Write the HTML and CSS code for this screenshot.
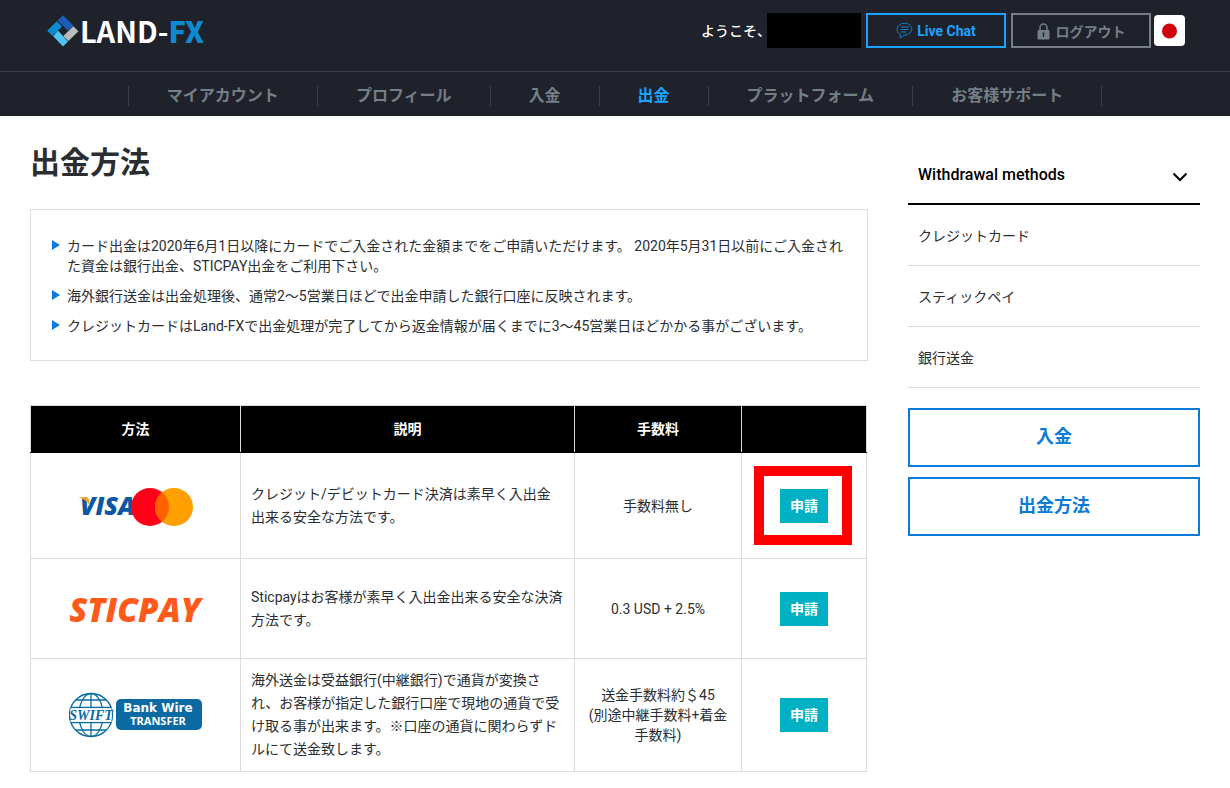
FILE: index.html
```html
<!DOCTYPE html>
<html lang="ja">
<head>
<meta charset="utf-8">
<meta name="viewport" content="width=device-width, initial-scale=1">
<title>出金方法 | LAND-FX</title>
<link rel="stylesheet" href="styles.css">
</head>
<body>
<header class="site-header">
  <div class="topbar">
    <a class="logo" href="#">
      <svg class="logo-mark" viewBox="0 0 32 32" width="32" height="32" aria-hidden="true">
        <path fill="#1b5cb8" d="M10.500 5.500L16 0.200L26.500 10.500L21 15.800Z"/>
        <path fill="#0b8bd3" d="M9.800 6.200L15 11.500L5.500 21L0.200 15.800Z"/>
        <path fill="#b9bbbd" d="M26.300 11.200L31.500 16.200L21.500 26L16.300 21Z"/>
        <path fill="#4fc3f2" d="M11 15.600L6.200 21.300L16 31.500L21 26.500Z"/>
      </svg>
      <span class="logo-text">LAND-<b>FX</b></span>
    </a>
    <div class="account">
      <span class="welcome">ようこそ、</span>
      <span class="user-name"></span>
      <button class="top-btn chat" type="button">
        <svg viewBox="0 0 17 17" width="17" height="17" fill="none" stroke="#1580d0" stroke-width="1" aria-hidden="true">
          <path d="M4 16L4.500 12.800C-1.500 9.500 0.500 1.500 8.500 1.200C18 1.300 18.500 12.500 8 13.200C7 14.500 5.500 15.500 4 16Z"/>
          <path d="M5 5h8M4.500 7.500h8M4.500 10h6"/>
        </svg>
        <span>Live Chat</span>
      </button>
      <button class="top-btn logout" type="button">
        <svg viewBox="0 0 13 17" width="13" height="17" aria-hidden="true">
          <path d="M3 8V4.500a3.500 3.500 0 0 1 7 0V8" fill="none" stroke="currentColor" stroke-width="1.500"/>
          <rect x="0.500" y="7" width="12" height="9.500" rx="1" fill="currentColor"/>
          <path d="M6.500 9.500v4.500M5.500 10.500h2" stroke="#1f222a" stroke-width="1.200"/>
        </svg>
        <span>ログアウト</span>
      </button>
      <button class="flag" type="button" aria-label="日本語">
        <svg viewBox="0 0 31 31" width="31" height="31" aria-hidden="true"><circle cx="15.500" cy="16" r="7.500" fill="#d0000f"/></svg>
      </button>
    </div>
  </div>
  <nav class="main-nav">
    <a href="#">マイアカウント</a>
    <a href="#">プロフィール</a>
    <a href="#">入金</a>
    <a class="active" href="#">出金</a>
    <a href="#">プラットフォーム</a>
    <a href="#">お客様サポート</a>
  </nav>
</header>

<div class="page">
  <main>
    <h1>出金方法</h1>
    <ul class="notes">
      <li>カード出金は2020年6月1日以降にカードでご入金された金額までをご申請いただけます。 2020年5月31日以前にご入金された資金は銀行出金、STICPAY出金をご利用下さい。</li>
      <li>海外銀行送金は出金処理後、通常2～5営業日ほどで出金申請した銀行口座に反映されます。</li>
      <li>クレジットカードはLand-FXで出金処理が完了してから返金情報が届くまでに3～45営業日ほどかかる事がございます。</li>
    </ul>
    <div class="table-wrap">
    <table class="methods">
      <colgroup><col class="c-method"><col><col class="c-fee"><col class="c-action"></colgroup>
      <thead>
        <tr><th>方法</th><th>説明</th><th>手数料</th><th></th></tr>
      </thead>
      <tbody>
        <tr class="row-card">
          <td>
            <svg class="brand" viewBox="0 0 134 50" width="134" height="50" role="img" aria-label="VISA Mastercard">
              <text class="visa" x="11" y="34">VISA</text>
              <path fill="#f7a520" d="M9 16H16.500Q19.500 16 20 19L21 25Q17 18 9 16Z"/>
              <circle cx="81" cy="26" r="19" fill="#ff0019"/>
              <circle cx="105" cy="26" r="19" fill="#ffa000"/>
              <path fill="#ff6000" d="M93 11.300A19 19 0 0 1 93 40.700A19 19 0 0 1 93 11.300Z"/>
            </svg>
          </td>
          <td class="desc">クレジット/デビットカード決済は素早く入出金出来る安全な方法です。</td>
          <td class="fee">手数料無し</td>
          <td><span class="highlight"><button class="apply" type="button">申請</button></span></td>
        </tr>
        <tr class="row-sticpay">
          <td>
            <svg class="brand" viewBox="0 0 134 50" width="134" height="50" role="img" aria-label="STICPAY">
              <text class="sticpay" x="66" y="38" text-anchor="middle">STICPAY</text>
            </svg>
          </td>
          <td class="desc">Sticpayはお客様が素早く入出金出来る安全な決済方法です。</td>
          <td class="fee">0.3 USD + 2.5%</td>
          <td><button class="apply" type="button">申請</button></td>
        </tr>
        <tr class="row-wire">
          <td>
            <svg class="brand" viewBox="1 0 134 50" width="134" height="50" role="img" aria-label="SWIFT Bank Wire Transfer">
              <g fill="none" stroke="#0b6aa2" stroke-width="1.300">
                <circle cx="23" cy="25" r="21.500"/>
                <ellipse cx="23" cy="25" rx="12" ry="21.500"/>
                <path d="M23 3.500v43M8 10h30M3 17.500h40M3 32.500h40M8 40h30"/>
              </g>
              <path fill="#fff" d="M2.500 18.200H43.500V31.800H2.500Z"/>
              <text class="swift" x="23" y="30" text-anchor="middle">SWIFT</text>
              <rect x="48" y="9" width="86" height="31" rx="5" fill="#0b6aa2"/>
              <text class="wire" x="90" y="22" text-anchor="middle">Bank Wire</text>
              <text class="transfer" x="90" y="35" text-anchor="middle">TRANSFER</text>
            </svg>
          </td>
          <td class="desc">海外送金は受益銀行(中継銀行)で通貨が変換され、お客様が指定した銀行口座で現地の通貨で受け取る事が出来ます。※口座の通貨に関わらずドルにて送金致します。</td>
          <td class="fee">送金手数料約＄45<br>(別途中継手数料+着金手数料)</td>
          <td><button class="apply" type="button">申請</button></td>
        </tr>
      </tbody>
    </table>
    </div>
  </main>

  <aside class="sidebar">
    <button class="side-title" type="button">
      <span>Withdrawal methods</span>
      <svg viewBox="0 0 16 10" width="16" height="10" fill="none" stroke="currentColor" stroke-width="2" aria-hidden="true"><path d="M1.500 1.500L8 8L14.500 1.500"/></svg>
    </button>
    <ul class="side-list">
      <li><a href="#">クレジットカード</a></li>
      <li><a href="#">スティックペイ</a></li>
      <li><a href="#">銀行送金</a></li>
    </ul>
    <a class="side-btn" href="#">入金</a>
    <a class="side-btn" href="#">出金方法</a>
  </aside>
</div>
</body>
</html>
```
FILE: styles.css
```css
* {
  box-sizing: border-box;
}

body {
  margin: 0;
  background: #fff;
  color: #2b2e31;
  font: 14px/20px Roboto, "Noto Sans CJK JP", sans-serif;
}

a {
  color: inherit;
  text-decoration: none;
}

button {
  font: inherit;
  cursor: pointer;
}

/* Header */
.site-header {
  background: #1f222a;
}

.topbar {
  display: flex;
  justify-content: space-between;
  align-items: flex-start;
  min-height: 72px;
  padding: 13px 45px 0 47px;
  border-bottom: 1px solid #3a3e46;
}

.logo {
  display: flex;
  align-items: flex-start;
  gap: 1px;
  padding-top: 2px;
}

.logo-text {
  color: #fff;
  font: 700 29px/30px "Noto Sans CJK JP", sans-serif;
}

.logo-text b {
  color: #0b8bd3;
  font-weight: 900;
}

.account {
  display: flex;
  align-items: center;
}

.welcome {
  color: #fff;
  font-weight: 500;
}

.user-name {
  width: 94px;
  height: 35px;
  margin-left: -4px;
  background: #000;
}

.top-btn {
  display: flex;
  justify-content: center;
  align-items: center;
  gap: 4px;
  width: 140px;
  height: 35px;
  margin-left: 5px;
  padding: 0;
  border: 2px solid;
  background: none;
  font-weight: 700;
}

.chat {
  color: #1aa3ff;
}

.logout {
  gap: 6px;
  padding-top: 2px;
  color: #757e86;
}

.flag {
  width: 31px;
  height: 31px;
  margin-left: 3px;
  padding: 0;
  border: 0;
  border-radius: 4px;
  background: #fff;
}

.flag svg {
  display: block;
}

.main-nav {
  display: flex;
  justify-content: center;
  padding: 14px 0 10px;
}

.main-nav a {
  padding: 0 38px;
  border-right: 1px solid #3a3e46;
  color: #757e86;
  font-size: 16px;
  font-weight: 700;
  line-height: 20px;
}

.main-nav a:first-child {
  border-left: 1px solid #3a3e46;
}

.main-nav .active {
  color: #1aa3ff;
}

/* Content */
.page {
  display: grid;
  grid-template-columns: minmax(0, 1fr) 292px;
  gap: 40px;
  padding: 27px 30px 16px;
}

h1 {
  margin: 0 0 26px;
  font-size: 30px;
  font-weight: 700;
  line-height: 40px;
}

.notes {
  display: grid;
  gap: 10px;
  margin: 0 0 44px;
  padding: 26px 20px 24px 21px;
  border: 1px solid #dcdcdc;
  list-style: none;
}

.notes li {
  display: flex;
  gap: 7px;
}

.notes li::before {
  content: "";
  flex: none;
  height: 0;
  margin-top: 4px;
  border-left: 8px solid #0a7be0;
  border-top: 5px solid transparent;
  border-bottom: 5px solid transparent;
}

.table-wrap {
  padding-right: 1px;
}

.methods {
  width: 100%;
  border-collapse: collapse;
  table-layout: fixed;
}

.c-method {
  width: 210px;
}

.c-fee {
  width: 167px;
}

.c-action {
  width: 125px;
}

.methods th,
.methods td {
  padding: 0 10px;
  border: 1px solid #dcdcdc;
  text-align: center;
  vertical-align: middle;
}

.methods th {
  height: 47px;
  border-bottom-color: #000;
  background: #000;
  color: #fff;
  font-weight: 700;
}

.methods .desc {
  line-height: 23px;
  text-align: left;
}

.row-card {
  height: 106px;
}

.row-sticpay {
  height: 100px;
}

.row-wire {
  height: 113px;
}

.brand {
  display: block;
  margin: 0 auto;
}

.visa {
  fill: #0a57a4;
  font: italic 800 25px "Open Sans", sans-serif;
}

.sticpay {
  fill: #ff5a1a;
  font: italic 800 33px "Open Sans", sans-serif;
}

.swift {
  fill: #0b6aa2;
  font: italic 700 14px "Liberation Serif", serif;
}

.wire {
  fill: #fff;
  font: 700 12px "DejaVu Sans", sans-serif;
}

.transfer {
  fill: #fff;
  font: 700 11px "Noto Sans", sans-serif;
}

.apply {
  display: block;
  width: 48px;
  height: 34px;
  margin: 0 auto;
  padding: 0;
  border: 0;
  background: #00b1c5;
  color: #fff;
  font-weight: 700;
}

/* Marker drawn over the table cell around the first action */
.highlight {
  position: relative;
  display: block;
  width: 48px;
  margin: 0 auto;
}

.highlight::before {
  content: "";
  position: absolute;
  inset: -23px -24px -22px -26px;
  border: 10px solid #f00;
  pointer-events: none;
}

/* Sidebar */
.side-title {
  display: flex;
  justify-content: space-between;
  align-items: center;
  width: 100%;
  margin-top: 6px;
  padding: 16px 12px 18px 10px;
  border: 0;
  border-bottom: 2px solid #000;
  background: none;
  color: #000;
  font-size: 16px;
  font-weight: 500;
  line-height: 20px;
}

.side-title svg {
  margin-top: 4px;
}

.side-list {
  margin: 0 0 20px;
  padding: 0;
  list-style: none;
}

.side-list a {
  display: block;
  padding: 21px 10px 19px;
  border-bottom: 1px solid #dcdcdc;
}

.side-btn {
  display: block;
  margin-bottom: 10px;
  padding: 17px 0 18px;
  border: 2px solid #0a7bd8;
  color: #0a7bd8;
  font-size: 18px;
  font-weight: 700;
  text-align: center;
}
```
